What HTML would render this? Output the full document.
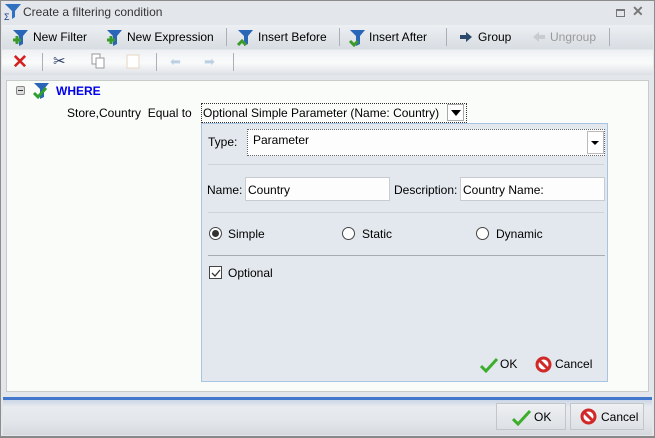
<!DOCTYPE html>
<html><head><style>
*{box-sizing:border-box;margin:0;padding:0}
body{width:655px;height:438px;overflow:hidden;font-family:"Liberation Sans",sans-serif;font-size:12px;color:#000;background:#e3e7ec;position:relative}
.abs{position:absolute}
#frame{left:0;top:0;width:655px;height:438px;border:1px solid #8c8c8c;border-bottom:2px solid #888;background:#e3e7ec}
.tb{left:2px;width:651px;background:linear-gradient(#eef0f3,#e2e6ea 50%,#d8dde3)}
.sep{position:absolute;top:3px;width:1px;height:18px;background:#a9b0b8}
.t{position:absolute;white-space:nowrap}
.inp{position:absolute;background:#fcfdfc;border:1px solid #c8ccd0}
.hr{position:absolute;left:8px;width:396px;height:1px;background:#fff;border-top:1px solid #d0d4d8}
.btn{position:absolute;border:1px solid #c2c6cb;background:linear-gradient(#eef0f2,#dde1e5)}
</style></head><body>
<div id="frame" class="abs"></div>
<!-- title -->
<svg class="abs" style="left:4px;top:3px" width="18" height="18" viewBox="0 0 18 18"><path d="M1 1h16l-6 7v6l-3 2V8z" fill="#2f70c0"/><text x="0" y="17" font-size="9" fill="#1b3f8a" font-family="Liberation Sans">Σ</text></svg>
<div class="t" style="left:23px;top:5px;font-size:12px;color:#333">Create a filtering condition</div>
<div class="abs" style="left:616px;top:9px;width:9px;height:8px;border:1px solid #777;border-top-width:2px"></div>
<div class="t" style="left:632px;top:3px;font-size:14px;color:#777;font-weight:bold">✕</div>
<!-- toolbar 1 -->
<div class="abs tb" style="top:25px;height:24px"></div>
<svg class="abs" style="left:11px;top:29px" width="18" height="18"><path d="M2 1h15l-5 6v8l-4 2V7z" fill="#2a66b8"/><path d="M2 11h8M6 7v8" stroke="#3a9a2a" stroke-width="3"/></svg>
<div class="t" style="left:33px;top:30px">New Filter</div>
<svg class="abs" style="left:105px;top:29px" width="18" height="18"><path d="M2 1h15l-5 6v8l-4 2V7z" fill="#2a66b8"/><path d="M2 11h8M6 7v8" stroke="#3a9a2a" stroke-width="3"/></svg>
<div class="t" style="left:127px;top:30px">New Expression</div>
<div class="sep" style="left:226px;top:28px"></div>
<svg class="abs" style="left:236px;top:29px" width="18" height="18"><path d="M2 1h15l-5 6v8l-4 2V7z" fill="#2a66b8"/><path d="M2 16l4-4 4 4" stroke="#3a9a2a" stroke-width="3" fill="none"/></svg>
<div class="t" style="left:258px;top:30px">Insert Before</div>
<div class="sep" style="left:339px;top:28px"></div>
<svg class="abs" style="left:348px;top:29px" width="18" height="18"><path d="M2 1h15l-5 6v8l-4 2V7z" fill="#2a66b8"/><path d="M2 12l4 4 4-4" stroke="#3a9a2a" stroke-width="3" fill="none"/></svg>
<div class="t" style="left:369px;top:30px">Insert After</div>
<div class="sep" style="left:446px;top:28px"></div>
<svg class="abs" style="left:459px;top:31px" width="14" height="12"><path d="M1 4h6V1l6 5-6 5V8H1z" fill="#2c4a6e"/></svg>
<div class="t" style="left:478px;top:30px">Group</div>
<svg class="abs" style="left:532px;top:31px" width="14" height="12"><path d="M13 4H7V1L1 6l6 5V8h6z" fill="#c8ccd0"/></svg>
<div class="t" style="left:550px;top:30px;color:#999">Ungroup</div>
<div class="sep" style="left:609px;top:28px"></div>
<!-- toolbar 2 -->
<div class="abs tb" style="top:50px;height:25px;background:linear-gradient(#eef0f3,#fafbfb 50%,#dde1e6)"></div>
<div class="t" style="left:12px;top:51px;font-size:19px;color:#d42020;font-weight:bold">✕</div>
<div class="sep" style="left:42px;top:53px"></div>
<div class="t" style="left:53px;top:52px;font-size:15px;color:#2a3a6a">✂</div>
<svg class="abs" style="left:90px;top:53px" width="16" height="16"><rect x="2" y="1" width="8" height="10" fill="#fff" stroke="#999"/><rect x="6" y="5" width="8" height="10" fill="#fff" stroke="#999"/></svg>
<svg class="abs" style="left:126px;top:54px" width="14" height="15"><rect x="1" y="1" width="12" height="13" fill="#fff" stroke="#e4d6c0"/></svg>
<div class="sep" style="left:156px;top:53px"></div>
<div class="t" style="left:170px;top:54px;color:#bcd0e4;font-size:13px">⬅</div>
<div class="t" style="left:204px;top:54px;color:#bcd0e4;font-size:13px">➡</div>
<div class="sep" style="left:233px;top:53px"></div>
<!-- content -->
<div class="abs" style="left:6px;top:80px;width:643px;height:312px;background:#fafcfa;border:1px solid #c8ccc8"></div>
<div class="abs" style="left:16px;top:86px;width:9px;height:9px;border:1px solid #888;background:#ddd;border-radius:2px"></div>
<div class="abs" style="left:18px;top:90px;width:5px;height:1px;background:#333"></div>
<svg class="abs" style="left:32px;top:82px" width="18" height="18"><path d="M2 1h15l-5 6v8l-4 2V7z" fill="#2a66b8"/><path d="M2 11l4 4 8-9" stroke="#2da02d" stroke-width="3" fill="none"/></svg>
<div class="t" style="left:56px;top:84px;color:#0000ee;font-weight:bold">WHERE</div>
<div class="t" style="left:67px;top:106px">Store,Country&nbsp; Equal to</div>
<div class="abs" style="left:201px;top:103px;width:266px;height:20px;border:1px dotted #333"></div>
<div class="t" style="left:203px;top:106px">Optional Simple Parameter (Name: Country)</div>
<div class="abs" style="left:447px;top:104px;width:17px;height:17px;border:1px solid #aaa;background:#fff"></div>
<div class="abs" style="left:451px;top:110px;border-left:5px solid transparent;border-right:5px solid transparent;border-top:6px solid #000"></div>
<!-- panel -->
<div class="abs" style="left:201px;top:123px;width:407px;height:259px;background:#e3e8ee;border:1px solid #a9c4e3">
 <div class="t" style="left:6px;top:11px">Type:</div>
 <div class="abs" style="left:45px;top:5px;width:358px;height:27px;border:1px dotted #666;background:#fcfdfc"></div>
 <div class="t" style="left:51px;top:9px">Parameter</div>
 <div class="abs" style="left:385px;top:7px;width:17px;height:23px;border:1px solid #bbb;background:#fff"></div>
 <div class="abs" style="left:389px;top:17px;border-left:4px solid transparent;border-right:4px solid transparent;border-top:4px solid #000"></div>
 <div class="hr" style="top:40px;left:6px"></div>
 <div class="t" style="left:5px;top:59px">Name:</div>
 <div class="inp" style="left:43px;top:53px;width:145px;height:24px"></div>
 <div class="t" style="left:46px;top:59px">Country</div>
 <div class="t" style="left:192px;top:59px">Description:</div>
 <div class="inp" style="left:258px;top:53px;width:145px;height:24px"></div>
 <div class="t" style="left:261px;top:59px">Country Name:</div>
 <div class="hr" style="top:88px;left:6px"></div>
 <div class="abs" style="left:7px;top:103px;width:13px;height:13px;border:1px solid #444;border-radius:50%;background:#fff"></div>
 <div class="abs" style="left:10px;top:106px;width:7px;height:7px;border-radius:50%;background:#333"></div>
 <div class="t" style="left:26px;top:103px">Simple</div>
 <div class="abs" style="left:140px;top:103px;width:13px;height:13px;border:1px solid #444;border-radius:50%;background:#fff"></div>
 <div class="t" style="left:160px;top:103px">Static</div>
 <div class="abs" style="left:274px;top:103px;width:13px;height:13px;border:1px solid #444;border-radius:50%;background:#fff"></div>
 <div class="t" style="left:294px;top:103px">Dynamic</div>
 <div class="abs" style="left:6px;top:131px;width:397px;height:1px;background:#a8acb0"></div>
 <div class="abs" style="left:7px;top:142px;width:13px;height:13px;border:1px solid #444;background:#fff"></div>
 <svg class="abs" style="left:8px;top:143px" width="12" height="12"><path d="M2 6l3 3 5-6" stroke="#333" stroke-width="1.3" fill="none"/></svg>
 <div class="t" style="left:26px;top:142px">Optional</div>
 <svg class="abs" style="left:278px;top:233px" width="18" height="16"><path d="M1 9l5 5 11-12" stroke="#3cae2c" stroke-width="3" fill="none"/></svg>
 <div class="t" style="left:298px;top:233px">OK</div>
 <svg class="abs" style="left:333px;top:232px" width="17" height="17"><circle cx="8.5" cy="8.5" r="6.5" fill="#fff" stroke="#d12828" stroke-width="3"/><path d="M4 4l9 9" stroke="#d12828" stroke-width="3"/></svg>
 <div class="t" style="left:353px;top:233px">Cancel</div>
</div>
<!-- footer -->
<div class="abs" style="left:3px;top:397px;width:649px;height:3px;background:#4478cc"></div>
<div class="abs" style="left:3px;top:400px;width:649px;height:35px;background:linear-gradient(#cad6e6,#e8ebef 20%,#e3e6ea 60%,#d6dadf)"></div>
<div class="btn" style="left:496px;top:403px;width:70px;height:27px"></div>
<svg class="abs" style="left:512px;top:409px" width="20" height="17"><path d="M1 10l5 5 12-13" stroke="#3cae2c" stroke-width="3" fill="none"/></svg>
<div class="t" style="left:534px;top:410px">OK</div>
<div class="btn" style="left:570px;top:403px;width:74px;height:27px"></div>
<svg class="abs" style="left:580px;top:408px" width="17" height="17"><circle cx="8.5" cy="8.5" r="6.5" fill="#fff" stroke="#d12828" stroke-width="3"/><path d="M4 4l9 9" stroke="#d12828" stroke-width="3"/></svg>
<div class="t" style="left:601px;top:410px">Cancel</div>
</body></html>
